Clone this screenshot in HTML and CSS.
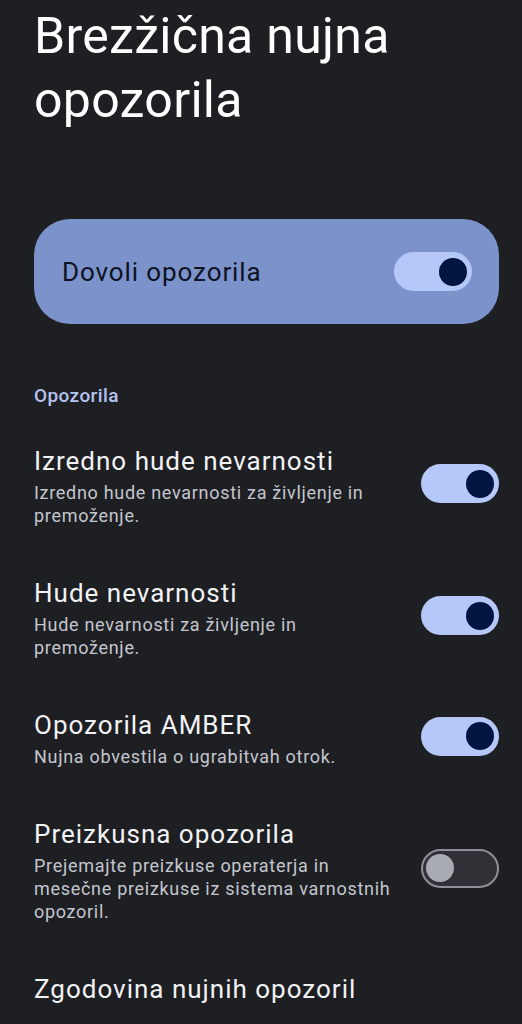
FILE: index.html
```html
<!DOCTYPE html>
<html lang="sl">
<head>
<meta charset="UTF-8" />
<meta name="viewport" content="width=device-width, initial-scale=1" />
<title>Brezžična nujna opozorila</title>
<link rel="stylesheet" href="styles.css">
</head>
<body>

<div class="page">
  <h1 class="page-title">Brezžična nujna opozorila</h1>

  <div class="main-switch">
    <span class="main-switch-label">Dovoli opozorila</span>
    <span class="toggle on"><span class="thumb"></span></span>
  </div>

  <div class="section-header">Opozorila</div>

  <div class="pref">
    <div class="pref-text">
      <div class="pref-title">Izredno hude nevarnosti</div>
      <div class="pref-summary">Izredno hude nevarnosti za življenje in premoženje.</div>
    </div>
    <span class="toggle on"><span class="thumb"></span></span>
  </div>

  <div class="pref">
    <div class="pref-text">
      <div class="pref-title">Hude nevarnosti</div>
      <div class="pref-summary">Hude nevarnosti za življenje in premoženje.</div>
    </div>
    <span class="toggle on"><span class="thumb"></span></span>
  </div>

  <div class="pref">
    <div class="pref-text">
      <div class="pref-title">Opozorila AMBER</div>
      <div class="pref-summary">Nujna obvestila o ugrabitvah otrok.</div>
    </div>
    <span class="toggle on"><span class="thumb"></span></span>
  </div>

  <div class="pref">
    <div class="pref-text">
      <div class="pref-title">Preizkusna opozorila</div>
      <div class="pref-summary">Prejemajte preizkuse operaterja in mesečne preizkuse iz sistema varnostnih opozoril.</div>
    </div>
    <span class="toggle off"><span class="thumb"></span></span>
  </div>

  <div class="pref">
    <div class="pref-text">
      <div class="pref-title">Zgodovina nujnih opozoril</div>
    </div>
  </div>
</div>

</body>
</html>
```

FILE: styles.css
```css
html, body {
  margin: 0; padding: 0;
  height: 100%; width: 100%;
  overflow: hidden;
  background: #1e1f23;
  font-family: Roboto, 'Noto Sans', sans-serif;
  color: #e3e2e6;
}
.page {
  padding: 4px 23px 0 34px;
}
.page-title {
  margin: 0;
  font-size: 50px;
  line-height: 64px;
  font-weight: 400;
  letter-spacing: 0.3px;
  color: #ffffff;
}
.main-switch {
  margin-top: 87px;
  height: 105px;
  border-radius: 36px;
  background: #7b92ca;
  display: flex;
  align-items: center;
  justify-content: space-between;
  padding: 0 27px 0 28px;
}
.main-switch-label {
  font-size: 26px;
  letter-spacing: 0.9px;
  color: #0e1222;
}
.section-header {
  margin-top: 60px;
  margin-bottom: 12px;
  font-size: 19px;
  line-height: 24px;
  font-weight: 500;
  letter-spacing: 0.4px;
  color: #b4c3f0;
}
.pref {
  display: flex;
  align-items: center;
  padding: 25px 0;
}
.pref-text {
  flex: 1;
  max-width: 364px;
}
.pref-title {
  font-size: 26px;
  line-height: 32px;
  letter-spacing: 1px;
  color: #f2f2f5;
}
.pref-summary {
  margin-top: 4px;
  font-size: 18px;
  line-height: 23px;
  letter-spacing: 0.7px;
  color: #c4c6cf;
}
.pref .toggle {
  margin-left: auto;
  margin-bottom: 5px;
}
.toggle {
  box-sizing: border-box;
  width: 78px;
  height: 39px;
  border-radius: 20px;
  display: flex;
  align-items: center;
  flex-shrink: 0;
}
.toggle .thumb {
  width: 28px;
  height: 28px;
  border-radius: 50%;
}
.toggle.on {
  background: #b6c7fa;
  justify-content: flex-end;
  padding: 0 5px;
}
.toggle.on .thumb {
  background: #001641;
}
.toggle.off {
  background: #303137;
  border: 2px solid #8e9099;
  padding: 0 3px;
}
.toggle.off .thumb {
  background: #a9abb3;
}
```
